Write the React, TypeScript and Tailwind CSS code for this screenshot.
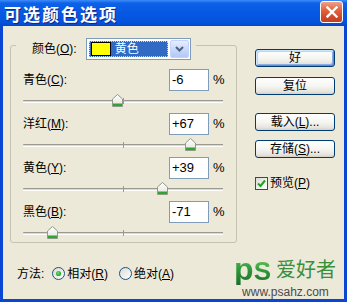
import React from "react";

const ui = "font-['Liberation_Sans','Noto_Sans_CJK_SC',sans-serif]";

function Thumb() {
  return (
    <svg width="11" height="13" viewBox="0 0 11 13">
      <defs>
        <linearGradient id="tg" x1="0" y1="0" x2="0" y2="1">
          <stop offset="0" stopColor="#FFFFFF" />
          <stop offset="1" stopColor="#E4E3DB" />
        </linearGradient>
      </defs>
      <path d="M5.5 0.5 L10.5 5 V12.5 H0.5 V5 Z" fill="url(#tg)" stroke="#8E9A8A" strokeWidth="1" />
      <rect x="1" y="9.5" width="9" height="2.5" fill="#2FA52F" />
      <rect x="1" y="9" width="9" height="1" fill="#7FD07F" />
    </svg>
  );
}

function Slider({ value }: { value: number }) {
  const center = 100 + value;
  return (
    <div className="relative ml-[12px] w-[200px] h-[22px]">
      <div className="absolute left-0 right-0 top-[9px] h-[3px] border-t border-[#9C9A8D] bg-[#DCDACF] border-b border-b-white rounded-l-[1px]" />
      <div className="absolute left-[100px] top-[7px] w-px h-[6px] bg-[#9C9A8D]" />
      <div className="absolute top-[3px]" style={{ left: center - 5 }}>
        <Thumb />
      </div>
    </div>
  );
}

function Row({ label, k, value }: { label: string; k: string; value: string }) {
  return (
    <div className="flex flex-col">
      <div className="flex items-center h-[22px] pl-[12px] pr-[12px]">
        <span className="text-[12px] text-black">
          {label}(<u>{k}</u>):
        </span>
        <div className="ml-auto w-[40px] h-[22px] border border-[#7F9DB9] bg-white flex items-center pl-[2px] text-[13px] text-black">
          {value}
        </div>
        <span className="ml-[4px] text-[13px] text-black w-[11px]">%</span>
      </div>
      <Slider value={parseInt(value, 10)} />
    </div>
  );
}

function Btn({ children, def, className }: { children: React.ReactNode; def?: boolean; className?: string }) {
  return (
    <div
      className={
        "w-[80px] h-[18px] rounded-[3px] border border-[#003C74] flex items-center justify-center text-[12px] text-black bg-[linear-gradient(180deg,#FFFFFF_0%,#F4F4F0_55%,#E6E4DC_85%,#D6D0C5_100%)] " +
        (def
          ? "shadow-[inset_1px_1px_0_#CEE7FF,inset_-1px_-1px_0_#6982EE,inset_2px_2px_0_#BCD4F6,inset_-2px_-2px_0_#89ADE4] "
          : "") +
        (className || "")
      }
    >
      {children}
    </div>
  );
}

function Radio({ checked }: { checked?: boolean }) {
  return (
    <svg width="13" height="13" viewBox="0 0 13 13">
      <defs>
        <linearGradient id="rg" x1="0" y1="0" x2="1" y2="1">
          <stop offset="0" stopColor="#DCDBD3" />
          <stop offset="1" stopColor="#FFFFFF" />
        </linearGradient>
        <radialGradient id="rd" cx="0.4" cy="0.4" r="0.7">
          <stop offset="0" stopColor="#6EDA6E" />
          <stop offset="1" stopColor="#1E9A1E" />
        </radialGradient>
      </defs>
      <circle cx="6.5" cy="6.5" r="6" fill="url(#rg)" stroke="#1C5180" strokeWidth="1" />
      {checked && <circle cx="6.5" cy="6.5" r="2.6" fill="url(#rd)" />}
    </svg>
  );
}

export default function App() {
  return (
    <div className={"w-[347px] h-[302px] flex flex-col bg-[#0A45D4] overflow-hidden " + ui}>
      {/* title bar */}
      <div className="h-[26px] flex items-center pl-[4px] pr-[4px] bg-[linear-gradient(180deg,#3D8CF7_0%,#0D62E8_12%,#0658E2_50%,#0553DC_85%,#0447C8_100%)]">
        <span className="text-white font-bold text-[17px] tracking-[2px] leading-none [text-shadow:1px_1px_0_#0A2A8C] font-['Noto_Sans_CJK_SC',sans-serif]">
          可选颜色选项
        </span>
        <div className="ml-auto -mt-[2px] w-[23px] h-[22px] rounded-[3px] border border-white flex items-center justify-center bg-[linear-gradient(180deg,#F0A08A_0%,#E2633F_40%,#D2492A_75%,#C23E22_100%)]">
          <svg width="12" height="12" viewBox="0 0 12 12">
            <path d="M1.5 1.5 L10.5 10.5 M10.5 1.5 L1.5 10.5" stroke="#FFFFFF" strokeWidth="2.4" strokeLinecap="square" />
          </svg>
        </div>
      </div>

      {/* body */}
      <div className="flex-1 mx-[3px] mb-[3px] bg-[#ECE9D8] flex flex-col">
        <div className="flex">
          {/* group box */}
          <div className="ml-[7px] mt-[19px] w-[227px] h-[198px] border border-[#C5C2B2] rounded-[3px] flex flex-col">
            <div className="-mt-[8px] ml-[5px] self-start bg-[#ECE9D8] flex items-center pl-[16px] pr-[5px] h-[22px]">
              <span className="text-[12px] text-black">
                颜色(<u>O</u>):
              </span>
              <div className="ml-[9px] w-[105px] h-[22px] border border-[#7F9DB9] bg-white flex items-center pl-[2px] pr-[1px]">
                <div className="w-[79px] h-[16px] bg-[#316AC5] border border-dotted border-[#C8D8F0] flex items-center pl-[1px]">
                  <div className="w-[20px] h-[14px] bg-[#FFFF00] border border-black" />
                  <span className="ml-[4px] text-[12px] text-white leading-none">黄色</span>
                </div>
                <div className="ml-auto w-[19px] h-[18px] rounded-[2px] border border-[#C3D3FD] bg-[linear-gradient(180deg,#E6EEFC_0%,#C9DAFB_50%,#B4C8F6_100%)] flex items-center justify-center">
                  <svg width="9" height="6" viewBox="0 0 9 6">
                    <path d="M1 1 L4.5 4.5 L8 1" fill="none" stroke="#4D6185" strokeWidth="2" />
                  </svg>
                </div>
              </div>
            </div>
            <div className="mt-[9px] flex flex-col">
              <Row label="青色" k="C" value="-6" />
              <Row label="洋红" k="M" value="+67" />
              <Row label="黄色" k="Y" value="+39" />
              <Row label="黑色" k="B" value="-71" />
            </div>
          </div>

          {/* right buttons */}
          <div className="ml-[18px] mt-[23px] flex flex-col">
            <Btn def>好</Btn>
            <Btn className="mt-[10px]">复位</Btn>
            <Btn className="mt-[18px]">
              载入(<u>L</u>)...
            </Btn>
            <Btn className="mt-[9px]">
              存储(<u>S</u>)...
            </Btn>
            <div className="mt-[16px] flex items-center">
              <div className="w-[13px] h-[13px] border border-[#1C5180] bg-[linear-gradient(135deg,#DCDBD3_0%,#FFFFFF_100%)] flex items-center justify-center">
                <svg width="9" height="9" viewBox="0 0 9 9">
                  <path d="M1 4.5 L3.5 7 L8 1.5" fill="none" stroke="#21A121" strokeWidth="2" />
                </svg>
              </div>
              <span className="ml-[2px] text-[12px] text-black">
                预览(<u>P</u>)
              </span>
            </div>
          </div>
        </div>

        {/* bottom row */}
        <div className="flex flex-1">
          <div className="pl-[14px] mt-[24px] h-[13px] flex items-center text-[12px] text-black">
            <span>方法:</span>
            <span className="ml-[8px] flex">
              <Radio checked />
            </span>
            <span className="ml-[2px]">
              相对(<u>R</u>)
            </span>
            <span className="ml-[11px] flex">
              <Radio />
            </span>
            <span className="ml-[2px]">
              绝对(<u>A</u>)
            </span>
          </div>
          <div className="ml-auto mr-[8px] mt-[10px] flex flex-col">
            <div className="flex items-end">
              <span className="text-[32px] font-bold leading-none bg-[linear-gradient(180deg,#6CC45A_0%,#2E9A3A_50%,#1C6E28_100%)] bg-clip-text text-transparent font-['Liberation_Sans',sans-serif]">
                p
              </span>
              <span className="text-[26px] font-bold leading-none mb-[1px] bg-[linear-gradient(180deg,#6CC45A_0%,#2E9A3A_50%,#1C6E28_100%)] bg-clip-text text-transparent font-['Liberation_Sans',sans-serif]">
                S
              </span>
              <span className="ml-[5px] mb-[6px] text-[20px] leading-none text-[#3A8F3C] font-['Noto_Sans_CJK_SC',sans-serif]">
                爱好者
              </span>
            </div>
            <span className="pl-[8px] mt-[1px] text-[12px] leading-[12px] text-[#4A4A4A] font-['Liberation_Sans',sans-serif]">
              www.psahz.com
            </span>
          </div>
        </div>
      </div>
    </div>
  );
}
